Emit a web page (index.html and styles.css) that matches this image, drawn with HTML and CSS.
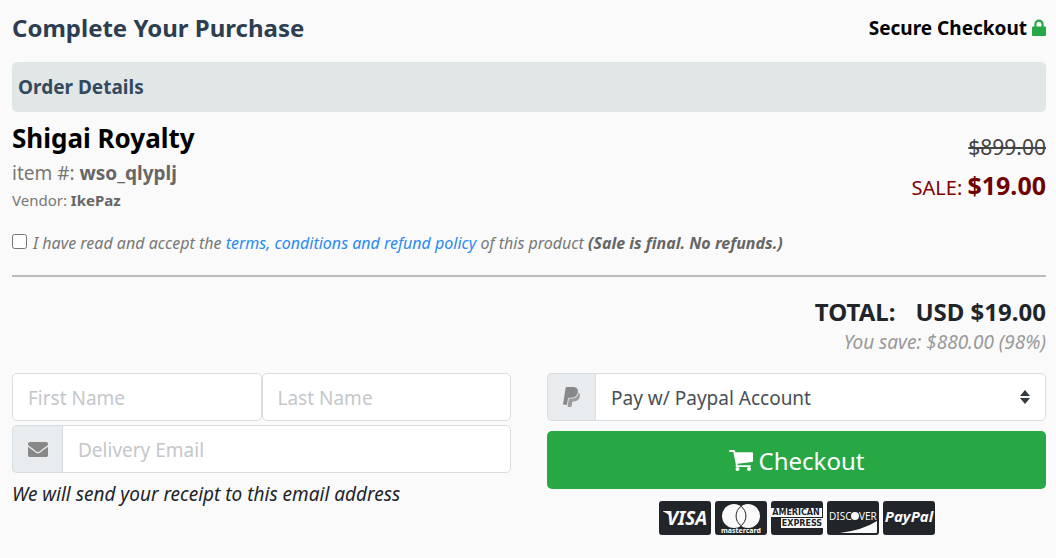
FILE: index.html
```html
<!DOCTYPE html>
<html lang="en">
<head>
    <meta charset="UTF-8">
    <meta name="viewport" content="width=device-width, initial-scale=1.0">
    <title>Complete Your Purchase</title>
    <link rel="stylesheet" href="styles.css">
</head>
<body>
    <form class="checkout">
        <header class="page-header">
            <h1>Complete Your Purchase</h1>
            <div class="secure">
                Secure Checkout
                <svg class="icon-lock" viewBox="0 0 14 17" aria-hidden="true">
                    <path fill-rule="evenodd" d="M1 7.5h1.3V5.2a4.7 4.7 0 0 1 9.4 0v2.3H13q1 0 1 1V16q0 1-1 1H1q-1 0-1-1V8.5q0-1 1-1zM4.5 7.5h5V5.2a2.5 2.5 0 0 0-5 0z"/>
                </svg>
            </div>
        </header>

        <h2 class="section-title">Order Details</h2>

        <section class="product">
            <div class="product-info">
                <h3>Shigai Royalty</h3>
                <div class="item-number">item #: <b>wso_qlyplj</b></div>
                <div class="vendor">Vendor: <b>IkePaz</b></div>
            </div>
            <div class="product-price">
                <s class="old-price">$899.00</s>
                <div class="sale">SALE: <b>$19.00</b></div>
            </div>
        </section>

        <div class="terms">
            <input type="checkbox" id="accept">
            <label for="accept">I have read and accept the <a href="#">terms, conditions and refund policy</a> of this product <b>(Sale is final. No refunds.)</b></label>
        </div>

        <hr>

        <div class="total"><span>TOTAL:</span><span>USD $19.00</span></div>
        <div class="savings">You save: $880.00 (98%)</div>

        <div class="columns">
            <div class="customer">
                <div class="names">
                    <input class="field" type="text" placeholder="First Name" aria-label="First Name">
                    <input class="field" type="text" placeholder="Last Name" aria-label="Last Name">
                </div>
                <div class="input-group">
                    <span class="addon addon-email">
                        <svg class="icon-mail" viewBox="0 64 512 384" aria-hidden="true"><path d="M502.3 190.8c3.9-3.1 9.7-.2 9.7 4.7V400c0 26.5-21.5 48-48 48H48c-26.5 0-48-21.5-48-48V195.6c0-5 5.7-7.8 9.7-4.7 22.4 17.4 52.1 39.5 154.1 113.6 21.1 15.4 56.7 47.8 92.2 47.6 35.7.3 72-32.8 92.3-47.6 102-74.1 131.6-96.3 154-113.7zM256 320c23.2.4 56.6-29.2 73.4-41.4 132.7-96.3 142.8-104.7 173.4-128.7 5.8-4.5 9.2-11.5 9.2-18.9v-19c0-26.5-21.5-48-48-48H48c-26.5 0-48 21.5-48 48v19c0 7.4 3.4 14.3 9.2 18.9 30.6 23.9 40.7 32.4 173.4 128.7 16.8 12.2 50.2 41.8 73.4 41.4z"/></svg>
                    </span>
                    <input class="field" type="email" placeholder="Delivery Email" aria-label="Delivery Email">
                </div>
                <p class="note">We will send your receipt to this email address</p>
            </div>

            <div class="payment">
                <div class="input-group">
                    <span class="addon">
                        <svg class="icon-paypal" viewBox="0 28 384 456" aria-hidden="true"><path d="M111.4 295.9c-3.5 19.2-17.4 108.7-21.5 134-.3 1.8-1 2.5-3 2.5H12.3c-7.6 0-13.1-6.6-12.1-13.9L58.8 46.6c1.5-9.6 10.1-16.9 20-16.9 152.3 0 165.1-3.7 204 11.4 60.1 23.3 65.6 79.5 44 140.3-21.5 62.6-72.5 89.5-140.1 90.3-43.4.7-69.5-7-75.3 24.2z"/><path opacity=".8" d="M357.1 152c-1.8-1.3-2.5-1.8-3 1.3-2 11.4-5.1 22.5-8.8 33.6-39.9 113.8-150.5 103.9-204.5 103.9-6.1 0-10.1 3.3-10.9 9.4-22.6 140.4-27.1 169.7-27.1 169.7-1 7.1 3.5 12.9 10.6 12.9h63.5c8.6 0 15.7-6.3 17.4-14.9.7-5.4-1.1 6.1 14.4-91.3 4.6-22 14.3-19.7 29.3-19.7 71 0 126.4-28.8 142.9-112.3 6.5-34.8 4.6-71.4-23.8-92.6z"/></svg>
                    </span>
                    <select class="field" aria-label="Payment method">
                        <option>Pay w/ Paypal Account</option>
                    </select>
                </div>
                <button type="submit" class="btn-checkout">
                    <svg class="icon-cart" viewBox="0 0 24 21" aria-hidden="true">
                        <path d="M1 0h4q.8 0 1 .9L6.3 2.3H23q1 0 1 1V11q0 .9-.9 1L8.6 13.7l.2 1.5H21q.9 0 .9.9t-.9.9H7.5q-1 0-1-1l.4-1.2L4.3 2H1Q0 2 0 1t1-1z"/>
                        <circle cx="8.5" cy="19" r="2"/>
                        <circle cx="20" cy="19" r="2"/>
                    </svg>
                    Checkout
                </button>
                <div class="cards">
                    <svg viewBox="0 0 52 34" role="img" aria-label="Visa">
                        <rect class="card-bg" width="52" height="34" rx="3"/>
                        <path class="card-fg" d="M4 10h6q1 0 1.5 1.5L13 19q-2-6-9-8.5z"/>
                        <text class="card-visa" x="28" y="24">VISA</text>
                    </svg>
                    <svg viewBox="0 0 52 34" role="img" aria-label="Mastercard">
                        <rect class="card-bg" width="52" height="34" rx="3"/>
                        <circle class="card-fg" cx="19" cy="15" r="12"/>
                        <circle class="card-fg" cx="33" cy="15" r="12"/>
                        <path class="card-line" d="M26 5.3a12 12 0 0 1 0 19.4a12 12 0 0 1 0-19.4z"/>
                        <text class="card-mc" x="26" y="32">mastercard</text>
                    </svg>
                    <svg viewBox="0 0 52 34" role="img" aria-label="American Express">
                        <rect class="card-bg" width="52" height="34" rx="3"/>
                        <path class="card-fg" d="M0 7h51v9H0zM10 17h42v10H10z"/>
                        <text class="card-amex" x="25" y="14">AMERICAN</text>
                        <text class="card-amex" x="31" y="25">EXPRESS</text>
                    </svg>
                    <svg viewBox="0 0 52 34" role="img" aria-label="Discover">
                        <rect class="card-bg" width="52" height="34" rx="3"/>
                        <path class="card-fg" d="M50 20v11q0 1-1 1H13q23-3 37-12z"/>
                        <text class="card-disc" x="2" y="19">DISC</text>
                        <circle class="card-fg" cx="28" cy="15" r="4"/>
                        <text class="card-disc" x="32" y="19">VER</text>
                    </svg>
                    <svg viewBox="0 0 52 34" role="img" aria-label="PayPal">
                        <rect class="card-bg" width="52" height="34" rx="3"/>
                        <text class="card-pp" x="26" y="21">PayPal</text>
                    </svg>
                </div>
            </div>
        </div>
    </form>
</body>
</html>
```
FILE: styles.css
```css
* {
    box-sizing: border-box;
}
body {
    margin: 0;
    background-color: #fafafa;
    color: #212529;
    font-family: "Noto Sans", "Open Sans", sans-serif;
    font-size: 19px;
}
.checkout {
    padding: 12px 10px 20px 12px;
}
h1, h2, h3, p {
    margin: 0;
}
.page-header {
    display: flex;
    justify-content: space-between;
    height: 50px;
    line-height: 32px;
}
h1 {
    color: #2c3e50;
    font-size: 24px;
}
.secure {
    color: #000;
    font-weight: bold;
}
.icon-lock {
    width: 14px;
    height: 17px;
    fill: #28a745;
    vertical-align: -1px;
}
.section-title {
    padding: 0 6px;
    border-radius: 5px;
    background-color: #e1e6e6;
    color: #34495e;
    font-size: 19px;
    line-height: 50px;
}
.product {
    display: flex;
    justify-content: space-between;
    padding-top: 8px;
}
h3 {
    color: #000;
    font-size: 26px;
    line-height: 36px;
}
.product-info {
    color: #777;
}
.product-info b {
    color: #666;
}
.item-number {
    line-height: 34px;
}
.vendor {
    font-size: 15px;
    line-height: 20px;
}
.product-price {
    padding-top: 8px;
    text-align: right;
}
.old-price {
    color: #444;
    font-size: 21px;
    line-height: 38px;
}
.sale {
    color: #800000;
    font-size: 20px;
    line-height: 38px;
}
.sale b {
    color: #700000;
    font-size: 25px;
}
.terms {
    display: flex;
    gap: 6px;
    padding: 21px 0 20px;
    color: #777;
    font-size: 16px;
    font-style: italic;
    line-height: 24px;
}
.terms input {
    width: 15px;
    height: 15px;
    margin: 3px 0 0;
}
.terms b {
    color: #666;
}
a {
    color: #2a8af0;
    text-decoration: none;
}
hr {
    margin: 0 0 20px;
    border: 0;
    border-top: 2px solid #bbb;
}
.total {
    display: flex;
    justify-content: flex-end;
    gap: 20px;
    font-size: 24px;
    font-weight: bold;
    line-height: 30px;
}
.savings {
    color: #999;
    font-style: italic;
    line-height: 30px;
    text-align: right;
}
.columns {
    display: grid;
    grid-template-columns: 1fr 1fr;
    gap: 36px;
    margin-top: 16px;
}
.names, .input-group {
    display: flex;
}
.names {
    margin-bottom: 4px;
}
.field {
    flex: 1;
    width: 100%;
    min-width: 0;
    height: 48px;
    padding: 2px 15px 0;
    border: 1px solid #d8dde1;
    border-radius: 5px;
    background-color: #fff;
    color: #495057;
    font-family: inherit;
    font-size: 19px;
}
.field::placeholder {
    color: #c4c7ca;
}
.addon {
    display: flex;
    align-items: center;
    justify-content: center;
    width: 48px;
    border: 1px solid #d8dde1;
    border-right: 0;
    border-radius: 5px 0 0 5px;
    background-color: #e9ecef;
    fill: #888;
}
.addon-email {
    width: 50px;
}
.input-group .field {
    border-radius: 0 5px 5px 0;
}
.icon-mail {
    width: 20px;
    height: 15px;
}
.icon-paypal {
    width: 17px;
    height: 20px;
}
select.field {
    appearance: none;
    background: #fff url("data:image/svg+xml,%3Csvg xmlns='http://www.w3.org/2000/svg' viewBox='0 0 10 14'%3E%3Cpath fill='%23343a40' d='M5 0l5 6H0zM5 14l5-6H0z'/%3E%3C/svg%3E") no-repeat right 15px center / 10px 14px;
}
.note {
    padding-top: 4px;
    font-size: 19px;
    font-style: italic;
    line-height: 34px;
}
.btn-checkout {
    display: flex;
    align-items: center;
    justify-content: center;
    gap: 6px;
    width: 100%;
    height: 58px;
    margin-top: 10px;
    border: 0;
    border-radius: 5px;
    background-color: #28a745;
    color: #fff;
    font-family: inherit;
    font-size: 24px;
    cursor: pointer;
}
.icon-cart {
    width: 24px;
    height: 21px;
    fill: #fff;
}
.cards {
    display: flex;
    justify-content: center;
    gap: 4px;
    margin-top: 12px;
}
.cards svg {
    width: 52px;
    height: 34px;
}
.card-bg {
    fill: #212529;
}
.card-fg {
    fill: #fafafa;
}
.card-line {
    fill: none;
    stroke: #212529;
}
.cards text {
    fill: #fafafa;
    font-weight: bold;
    text-anchor: middle;
}
.card-visa {
    font-size: 19px;
    font-style: italic;
}
.card-mc {
    font-size: 7px;
}
.cards .card-amex {
    fill: #212529;
    font-family: "DejaVu Sans", sans-serif;
    font-size: 8px;
}
.cards .card-disc {
    font-size: 10px;
    font-weight: normal;
    text-anchor: start;
}
.card-pp {
    font-size: 15px;
    font-style: italic;
}
```
